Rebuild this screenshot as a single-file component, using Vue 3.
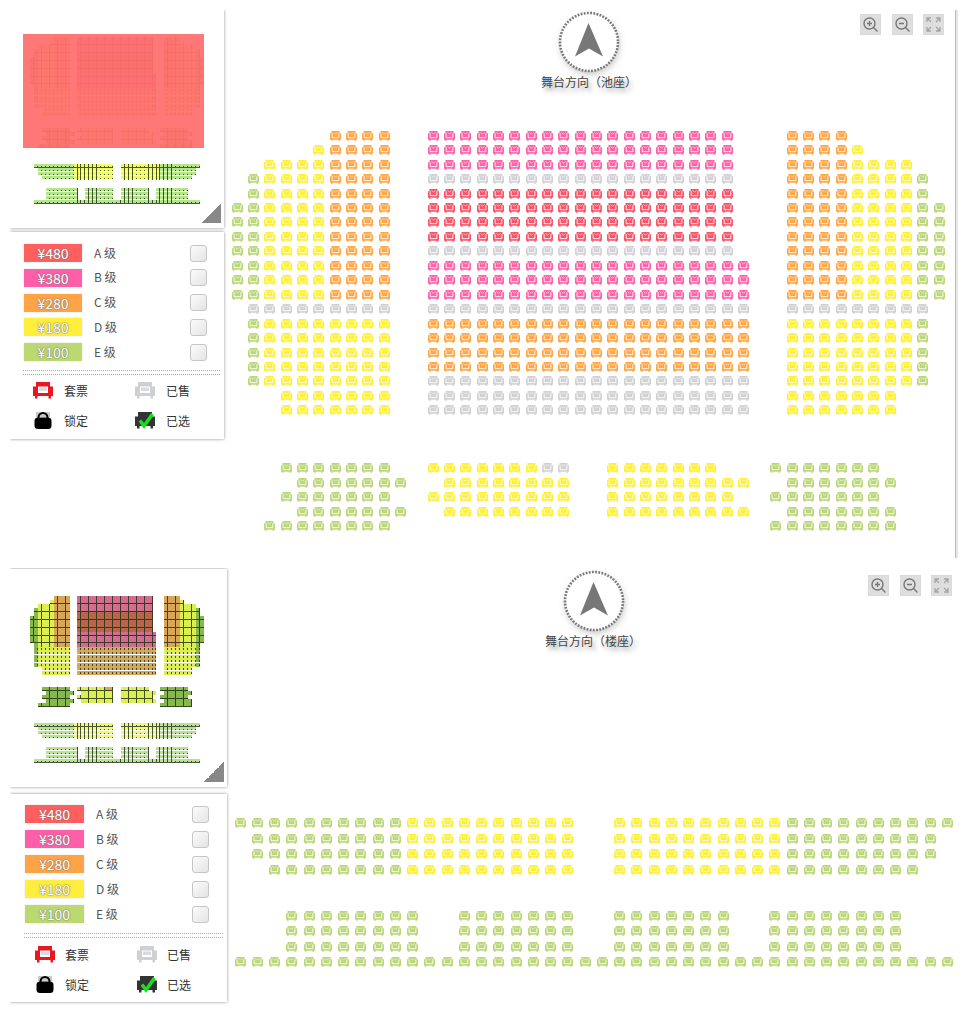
<template>
  <svg class="sprites" aria-hidden="true">
    <symbol id="seat" viewBox="0 0 22 20">
      <path d="M3 0H19V4.500H22V17.500H19.500V20H17V17.500H5V20H2.500V17.500H0V4.500H3Z" fill="currentColor" />
      <path d="M4.300 4.500V13.300H17.700V4.500" fill="none" stroke="#fff" stroke-width="1.700" />
      <path d="M7 2.500L11 6.500L15 2.500" fill="none" stroke="#fff" stroke-width="1.300" opacity="0.85" />
    </symbol>
    <symbol id="sofa" viewBox="0 0 20 17">
      <path d="M3 0H17V4.500H20V14H18V16.500H15.500V14H4.500V16.500H2V14H0V4.500H3Z" fill="currentColor" />
      <rect x="5" y="4.500" width="10" height="6.500" fill="#fff" />
      <rect x="6" y="5.500" width="8" height="3.500" fill="#b9c6d0" opacity="0.6" />
    </symbol>
    <symbol id="lock" viewBox="0 0 20 17">
      <rect x="3" y="0" width="14" height="5" fill="#c9c9c9" />
      <path d="M5.500 7V5.500a4.500 4.500 0 0 1 9 0V7" fill="none" stroke="#000" stroke-width="2" />
      <rect x="1.500" y="5.500" width="17" height="11.500" rx="3.500" fill="#000" />
    </symbol>
    <symbol id="picked" viewBox="0 0 20 17">
      <path d="M3 0H17V4.500H20V14H18V16.500H15.500V14H4.500V16.500H2V14H0V4.500H3Z" fill="#333" />
      <path d="M5 8.500L9 14L17.500 2" fill="none" stroke="#17e01f" stroke-width="3.400" />
    </symbol>
  </svg>

  <div class="page">
    <section v-for="hall in halls" :key="hall.name" class="hall" :class="hall.name">
      <aside class="side">
        <div class="panel">
          <svg class="mini" width="190" height="175" shape-rendering="crispEdges">
            <path v-for="(p, i) in miniMap" :key="i" :d="p.d" :fill="p.fill" :opacity="p.opacity" />
          </svg>
          <div v-if="hall.name === 'pool'" class="viewport"></div>
          <span class="corner"></span>
        </div>

        <div class="legend">
          <div class="prices">
            <div v-for="p in prices" :key="p.level" class="priceRow">
              <span class="swatch" :class="p.key">¥{{ p.price }}</span>
              <span class="level">{{ p.level }} 级</span>
              <span class="check"></span>
            </div>
          </div>
          <div class="dots"></div>
          <div class="keys">
            <div v-for="k in keys" :key="k.label" class="keyItem">
              <svg class="keyIcon" :class="k.cls"><use :href="k.icon" /></svg>
              <span>{{ k.label }}</span>
            </div>
          </div>
        </div>
      </aside>

      <div class="plan">
        <div class="compass">
          <svg class="needle" width="64" height="64" viewBox="0 0 64 64">
            <circle cx="32" cy="32" r="29" fill="#fff" stroke="#777" stroke-width="2.600" stroke-dasharray="1.800 1.400" />
            <path d="M31.500 13L46 46.500L32 38.500L18 46.500Z" fill="#777" />
          </svg>
          <div class="caption">舞台方向（{{ hall.title }}）</div>
        </div>

        <div class="tools">
          <button class="tool">
            <svg width="21" height="21" viewBox="0 0 21 21" fill="none" stroke="#777" stroke-width="1.400">
              <circle cx="9.500" cy="9.500" r="5.500" />
              <path d="M13.500 13.500L17.500 17.500M7 9.500H12M9.500 7V12" />
            </svg>
          </button>
          <button class="tool">
            <svg width="21" height="21" viewBox="0 0 21 21" fill="none" stroke="#777" stroke-width="1.400">
              <circle cx="9.500" cy="9.500" r="5.500" />
              <path d="M13.500 13.500L17.500 17.500M7 9.500H12" />
            </svg>
          </button>
          <button class="tool">
            <svg width="21" height="21" viewBox="0 0 21 21" fill="none" stroke="#a5a5a5" stroke-width="1.300">
              <path d="M4 8V4H8M4 4L8 8M13 4H17V8M17 4L13 8M4 13V17H8M4 17L8 13M13 17H17V13M17 17L13 13" />
            </svg>
          </button>
        </div>

        <div class="seats">
          <svg
            v-for="s in hall.seats"
            :key="s.r + '-' + s.c"
            class="seat"
            :class="s.k"
            :style="{ gridRow: s.r + 1, gridColumn: s.c + 1 }"
          >
            <use href="#seat" />
          </svg>
        </div>
      </div>
    </section>
  </div>
</template>

<script setup>
const wide = 'e0-1 d2-5 c6-9'
const wideR = 'c34-37 d38-41 e42-43'
const mid = 'e1 d2-5 c6-9'
const midR = 'c34-37 d38-41 e42'

const poolRows = [
  'c6-9 b12-30 c34-37',
  'd5 c6-9 b12-30 c34-37 d38',
  'd2-5 c6-9 b12-30 c34-37 d38-41',
  `${mid} s12-30 ${midR}`,
  `${mid} a12-30 ${midR}`,
  `${wide} a12-30 ${wideR}`,
  `${wide} a12-30 ${wideR}`,
  `${wide} a12-30 ${wideR}`,
  `${wide} s12-30 ${wideR}`,
  `${wide} b12-31 ${wideR}`,
  `${wide} b12-31 ${wideR}`,
  `${wide} b12-31 ${wideR}`,
  's1-9 s12-31 s34-42',
  'e1 d2-9 c12-31 d34-41 e42',
  'e1 d2-9 c12-31 d34-41 e42',
  'e1 d2-9 c12-31 d34-41 e42',
  'e1 d2-9 c12-31 d34-41 e42',
  'e1 d2-9 s12-31 d34-41 e42',
  'd3-9 s12-31 d34-40',
  'd3-9 s12-31 d34-40',
  '',
  '',
  '',
  'e3-9 d12-18 s19-20 d23-29 e33-39',
  'e4-10 d13-20 d23-31 e34-40',
  'e3-9 d12-20 d23-30 e33-39',
  'e4-10 d13-20 d23-31 e34-40',
  'e2-9 e33-40',
]

const balconyRows = [
  'e0-9 d10-19 d22-31 e32-41',
  'e1-9 d10-19 d22-31 e32-40',
  'e1-9 d10-19 d22-31 e32-40',
  'e2-9 d10-19 d22-31 e32-39',
  '',
  '',
  'e3-10 e13-19 e22-28 e31-38',
  'e3-10 e13-19 e22-28 e31-38',
  'e3-10 e13-19 e22-28 e31-38',
  'e0-41',
]

// "d2-5" means level d on columns 2 to 5
function parseRows(rows) {
  const seats = []
  rows.forEach((row, r) => {
    for (const [, k, from, to] of row.matchAll(/([a-es])(\d+)(?:-(\d+))?/g)) {
      for (let c = +from; c <= +(to ?? from); c++) seats.push({ r, c, k })
    }
  })
  return seats
}

const poolSeats = parseRows(poolRows)
const balconySeats = parseRows(balconyRows)

const halls = [
  { name: 'pool', title: '池座', seats: poolSeats },
  { name: 'balcony', title: '楼座', seats: balconySeats },
]

const prices = [
  { key: 'a', price: 480, level: 'A' },
  { key: 'b', price: 380, level: 'B' },
  { key: 'c', price: 280, level: 'C' },
  { key: 'd', price: 180, level: 'D' },
  { key: 'e', price: 100, level: 'E' },
]

const keys = [
  { label: '套票', icon: '#sofa', cls: 'red' },
  { label: '已售', icon: '#sofa', cls: 'grey' },
  { label: '锁定', icon: '#lock', cls: '' },
  { label: '已选', icon: '#picked', cls: '' },
]

// the thumbnail shows sold seats in the colour of the row above them
function buildMini() {
  const poolFill = { a: '#b9654a', b: '#d06c90', c: '#d8a658', d: '#dcee52', e: '#86b84e' }
  const balconyFill = { d: '#f1fa6c', e: '#b6e48e' }
  const fills = {}
  let dark = ''
  const last = {}

  const add = (fill, x, y, w, h) => {
    fills[fill] = (fills[fill] || '') + `M${x} ${y}h${w}v${h}h${-w}z`
  }

  for (const { r, c, k } of poolSeats) {
    const level = k === 's' ? last[c] || 'd' : k
    last[c] = level
    const x = Math.round(c * 3.95)
    const y = Math.round(r * 3.95)
    add(poolFill[level], x, y, 4, r >= 13 && r < 20 && r % 2 === 0 ? 3 : 4)
    if (r < 13 || r > 20) {
      if (c % 2 === 0) dark += `M${x + 3} ${y}h1v4h-1z`
      if (r % 2 === 1) dark += `M${x} ${y + 3}h4v1h-4z`
    } else {
      dark += `M${x + 3} ${y + 1}h1v2h-1z`
    }
  }

  for (const { r, c, k } of balconySeats) {
    const x = 4 + Math.round(c * 3.95)
    const y = 127 + Math.round(r * 3.95)
    add(balconyFill[k], x, y, 4, 3)
    const inked = (c >= 10 && c <= 15) || (c >= 21 && c <= 24) || (c >= 28 && c <= 34)
    if (inked) dark += `M${x + 3} ${y}h1v4h-1z`
    else dark += `M${x + 3} ${y + 2}h1v1h-1z`
    if (r === 0 || r === 9) dark += `M${x} ${y + 3}h4v1h-4z`
  }

  const paths = Object.keys(fills).map((fill) => ({ d: fills[fill], fill, opacity: 1 }))
  paths.push({ d: dark, fill: '#1c2a10', opacity: 0.8 })
  return paths
}

const miniMap = buildMini()
</script>

<style>
html,
body {
  background: #fff;
  overflow: hidden;
}
</style>

<style scoped>
.sprites {
  position: absolute;
  width: 0;
  height: 0;
}

.page {
  padding: 10px 0 0 10px;
  font-family: "Noto Sans CJK SC", "Noto Sans", sans-serif;
  color: #444;
}

.hall {
  position: relative;
  display: flex;
  overflow: hidden;
}

.hall.pool {
  width: 948px;
  height: 548px;
  margin-bottom: 10px;
}

.hall.balcony {
  width: 948px;
  height: 440px;
  padding-top: 1px;
  box-sizing: border-box;
}

.side {
  flex: none;
  display: flex;
  flex-direction: column;
}

.pool .side {
  width: 214px;
  margin-right: 5px;
  gap: 4px;
}

.balcony .side {
  width: 217px;
  margin-right: 4px;
  gap: 7px;
}

.panel {
  position: relative;
  height: 218px;
  background: #fff;
  box-shadow: 0 0 3px rgba(0, 0, 0, 0.45);
}

.mini {
  display: block;
  margin: 27px 0 0 20px;
}

.viewport {
  position: absolute;
  left: 13px;
  top: 24px;
  width: 181px;
  height: 114px;
  background: rgba(255, 112, 112, 0.94);
}

.corner {
  position: absolute;
  right: 3px;
  bottom: 5px;
  width: 20px;
  height: 20px;
  background: linear-gradient(135deg, transparent 50%, #888 50%);
}

.legend {
  background: #fff;
  box-shadow: 0 0 3px rgba(0, 0, 0, 0.45);
  padding-top: 12px;
  height: 207px;
  box-sizing: border-box;
}

.balcony .legend {
  height: 208px;
  padding-top: 11px;
}

.prices {
  display: flex;
  flex-direction: column;
  gap: 6.800px;
  padding: 0 17px 0 14px;
}

.balcony .prices {
  gap: 7px;
  padding-left: 15px;
  padding-right: 18px;
}

.priceRow {
  display: flex;
  align-items: center;
  height: 18px;
}

.swatch {
  width: 58px;
  height: 18px;
  line-height: 18px;
  flex: none;
  text-align: center;
  font-size: 14px;
  color: #fff;
  text-shadow: 0 0 1px #777, 0 0 2px #777;
  box-shadow: 0 0 2px rgba(0, 0, 0, 0.12);
}

.balcony .swatch {
  width: 59px;
}

.swatch.a {
  background: #ff5f5f;
}

.swatch.b {
  background: #ff5fa8;
}

.swatch.c {
  background: #ffa347;
}

.swatch.d {
  background: #ffee3b;
}

.swatch.e {
  background: #bcd870;
}

.level {
  margin: 0 0 2px 12px;
  font-size: 12px;
  color: #555;
}

.check {
  margin-left: auto;
  width: 15px;
  height: 15px;
  border: 1px solid #c6c6c6;
  border-radius: 3px;
  background: linear-gradient(135deg, #fbfbfb, #e4e4e4);
}

.dots {
  margin: 9px 4px 0 13px;
  height: 3px;
  border-top: 1px dotted #aaa;
  border-bottom: 1px dotted #aaa;
}

.balcony .dots {
  margin: 10px 4px 0 14px;
}

.keys {
  display: grid;
  grid-template-columns: 102px 80px;
  grid-auto-rows: 30px;
  padding-left: 23px;
}

.balcony .keys {
  padding-left: 25px;
  margin-top: 1px;
}

.keyItem {
  display: flex;
  align-items: center;
  gap: 11px;
  font-size: 12px;
  color: #333;
}

.balcony .keyItem {
  gap: 10px;
}

.keyIcon {
  width: 20px;
  height: 17px;
  flex: none;
}

.keyIcon.red {
  color: #ea1620;
}

.keyIcon.grey {
  color: #d0d0d0;
}

.plan {
  position: relative;
  flex: 1;
  min-width: 0;
}

.pool .plan {
  border-right: 1px solid #bdbdbd;
  box-shadow: 2px 0 0 #e6e6e6;
  margin-right: 2px;
}

.compass {
  display: flex;
  flex-direction: column;
  align-items: flex-start;
  width: 96px;
}

.pool .compass {
  margin-left: 312px;
}

.balcony .compass {
  margin-left: 314px;
}

.needle {
  display: block;
  margin-left: 16px;
  filter: drop-shadow(1px 3px 3px rgba(0, 0, 0, 0.2));
}

.balcony .needle {
  margin-left: 17px;
}

.caption {
  font-size: 12px;
  line-height: 16px;
  white-space: nowrap;
  color: #444;
  text-shadow: 3px 4px 4px rgba(0, 0, 0, 0.35);
}

.tools {
  position: absolute;
  top: 4px;
  right: 11px;
  display: flex;
  gap: 10.500px;
}

.balcony .tools {
  top: 6px;
  right: 6px;
}

.tool {
  width: 21px;
  height: 21px;
  padding: 0;
  border: none;
  background: #dedede;
  box-shadow: inset 0 0 1px #bbb;
}

.tool svg {
  display: block;
}

.seats {
  display: grid;
  place-items: center;
}

.pool .seats {
  grid-template-columns: repeat(44, 16.330px);
  grid-template-rows: repeat(28, 14.460px);
  margin-top: 38.500px;
}

.balcony .seats {
  grid-template-columns: repeat(42, 17.250px);
  grid-template-rows: repeat(10, 15.450px);
  margin: 166.600px 0 0 0.400px;
}

.seat {
  width: 11px;
  height: 10px;
}

.seat.a {
  color: #f7566a;
}

.seat.b {
  color: #ff62a8;
}

.seat.c {
  color: #ffa647;
}

.seat.d {
  color: #fff035;
}

.seat.e {
  color: #bcd77a;
}

.seat.s {
  color: #d2d2d4;
}
</style>
